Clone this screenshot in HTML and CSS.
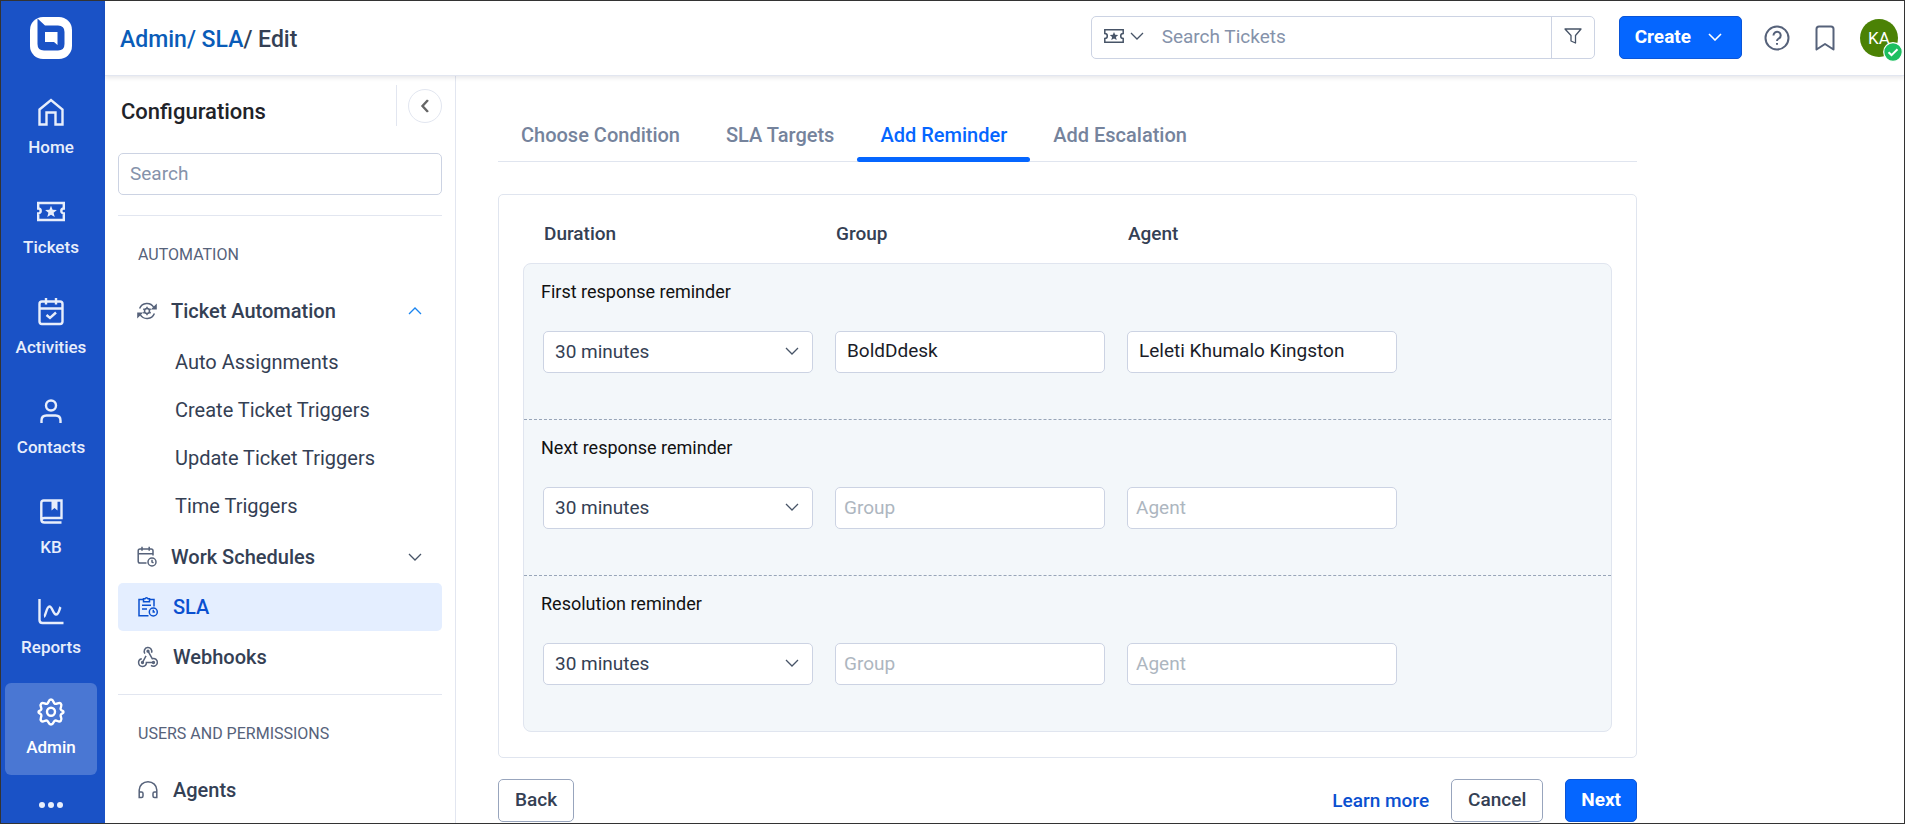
FILE: index.html
```html
<!DOCTYPE html>
<html lang="en">
<head>
<meta charset="utf-8">
<title>Admin / SLA / Edit</title>
<link rel="stylesheet" href="styles.css">
</head>
<body>
<div class="app">
  <nav class="rail" aria-label="Main">
    <a class="logo" href="#" aria-label="Home page">
      <svg width="42" height="42" viewBox="0 0 42 42"><rect width="42" height="42" rx="13" fill="#fff"/><path d="M7.500 1.500 L15 8.500 H28 Q34.500 8.500 34.500 15 V27 Q34.500 33.500 28 33.500 H14 Q7.500 33.500 7.500 27 Z" fill="#1a52c6"/><path d="M15 15h12.500v13l-3.500-3h-9z" fill="#fff"/></svg>
    </a>
    <a class="rail-item" href="#">
      <svg class="rail-icon" viewBox="0 0 28 28"><path d="M2.500 11.500 14 2l11.500 9.500V26.500h-7v-12h-9v12h-7z"/></svg>
      <span>Home</span>
    </a>
    <a class="rail-item" href="#">
      <svg class="rail-icon" viewBox="0 0 28 28"><path d="M1.200 5h25.600v5.500a2.500 2.500 0 0 0 0 5V22H1.200v-6.500a2.500 2.500 0 0 0 0-5z"/><path class="solid" d="M14 7.800l1.600 4 4.300.3-3.300 2.700 1.100 4.200-3.700-2.300-3.700 2.300 1.100-4.200-3.300-2.700 4.300-.3z"/></svg>
      <span>Tickets</span>
    </a>
    <a class="rail-item" href="#">
      <svg class="rail-icon" viewBox="0 0 28 28"><rect x="2.500" y="3.500" width="23" height="22.500" rx="2.500"/><path d="M2.500 10.500h23M9 0v6.500M19 0v6.500M9.500 17l3.500 3 6-5.500"/></svg>
      <span>Activities</span>
    </a>
    <a class="rail-item" href="#">
      <svg class="rail-icon" viewBox="0 0 28 28"><circle cx="14" cy="7.500" r="5"/><path d="M4.500 25V22.500q0-5 5-5h9q5 0 5 5V25"/></svg>
      <span>Contacts</span>
    </a>
    <a class="rail-item" href="#">
      <svg class="rail-icon" viewBox="0 0 28 28"><path d="M24.500 24.500H7.500q-3.200 0-3.200-3V5q0-2.500 2.500-2.500h17.700v17.500H7.500q-3 0-3 2"/><path class="solid" d="M14.500 2.500h6v10l-3-2.500-3 2.500z"/></svg>
      <span>KB</span>
    </a>
    <a class="rail-item" href="#">
      <svg class="rail-icon" viewBox="0 0 28 28"><path d="M2.500 1v21q0 3 3 3H26.500"/><path d="M7 18.500c1.500 0 2.500-10 5.500-10s3.500 8 6.500 8 3.500-6 4.500-7.500"/></svg>
      <span>Reports</span>
    </a>
    <a class="rail-item active" href="#" aria-current="page">
      <svg class="rail-icon" viewBox="0 0 28 28"><circle cx="14" cy="13.800" r="4"/><path d="M14 1.500c2.800 0 2 3.500 4 4.300s3.900-2.200 5.800-.2-.9 3.800-.1 5.800 2.800.8 2.800 2.600-2 1-2.800 2.900 2.200 3.800.1 5.900-3.800-1-5.800-.2-1.200 3.900-4 3.900-2-3.100-4-3.900-3.900 2.200-5.800.2.900-4 .1-5.900-2.800-1.100-2.800-2.900 2-.6 2.800-2.600-2.200-3.800-.1-5.800 3.800 1 5.800.2 1.200-4.300 4-4.300z"/></svg>
      <span>Admin</span>
    </a>
    <button class="rail-more" type="button" aria-label="More">
      <svg width="26" height="8" viewBox="0 0 26 8"><circle cx="4" cy="4" r="3"/><circle cx="13" cy="4" r="3"/><circle cx="22" cy="4" r="3"/></svg>
    </button>
  </nav>

  <div class="page">
    <header class="topbar">
      <div class="crumbs"><a href="#">Admin/</a> <a href="#">SLA</a>/ Edit</div>
      <div class="search-tickets">
        <button class="scope" type="button" aria-label="Search scope">
          <svg width="20" height="14" viewBox="0 0 20 14"><path d="M.8.800h18.400v3.700a2.300 2.300 0 0 0 0 5v3.700H.8V9.500a2.300 2.300 0 0 0 0-5z" fill="none" stroke="#475467" stroke-width="1.500"/><path d="M10 3l1.200 2.800 3 .2-2.300 2 .8 3-2.700-1.600L7.300 11l.8-3-2.300-2 3-.2z" fill="#475467"/></svg>
          <svg class="chev" viewBox="0 0 14 8"><path d="M1 1l6 6 6-6"/></svg>
        </button>
        <input type="text" placeholder="Search Tickets" aria-label="Search Tickets">
        <button class="filter" type="button" aria-label="Filter">
          <svg width="18" height="16" viewBox="0 0 18 16"><path d="M1 1h16l-5.500 6.500v5.500v2L7 13V7.500z" fill="none" stroke="#475467" stroke-width="1.300" stroke-linejoin="round"/></svg>
        </button>
      </div>
      <button class="btn primary create" type="button">Create
        <svg class="chev" viewBox="0 0 14 8"><path d="M1 1l6 6 6-6"/></svg>
      </button>
      <button class="icon-btn" type="button" aria-label="Help">
        <svg width="26" height="26" viewBox="0 0 26 26"><circle cx="13" cy="13" r="11.500"/><path d="M9.500 10.500a3.600 3.600 0 1 1 5.600 2.800c-1.300.9-2.100 1.300-2.100 2.700M13 18v1.800"/></svg>
      </button>
      <button class="icon-btn" type="button" aria-label="Bookmarks">
        <svg width="20" height="26" viewBox="0 0 20 26"><path d="M1.500 24.500V4q0-2.500 2.500-2.500h12q2.500 0 2.500 2.500v20.500L10 19z"/></svg>
      </button>
      <button class="avatar" type="button" aria-label="Account">KA
        <svg class="status" viewBox="0 0 20 20"><circle cx="10" cy="10" r="9.300" fill="#1dbf60" stroke="#fff" stroke-width="1.200"/><path d="M5.500 10.300l3 2.800 6-5.800" fill="none" stroke="#fff" stroke-width="2"/></svg>
      </button>
    </header>

    <div class="body">
      <aside class="config">
        <div class="config-head">
          <h2>Configurations</h2>
          <button class="collapse" type="button" aria-label="Collapse">
            <svg width="9" height="14" viewBox="0 0 9 14"><path d="M7.500 1L2 7l5.500 6" fill="none" stroke="#666" stroke-width="2.400"/></svg>
          </button>
        </div>
        <input class="config-search" type="text" placeholder="Search" aria-label="Search configurations">
        <section class="group">
          <h3>AUTOMATION</h3>
          <ul class="menu">
            <li><a class="entry" href="#">
              <svg class="entry-icon" viewBox="0 0 20 20"><path d="M2.600 7.500A7.900 7.900 0 0 1 16.800 6.500M17.400 12.500A7.900 7.900 0 0 1 3.200 13.500"/><path class="solid" d="M19.800 2.500V8.500h-6zM.2 17.500v-6h6z"/><circle cx="10" cy="10" r="2.500"/><path d="M10 5.800v1.500M10 12.700v1.500M6.300 7.900l1.300.8M12.400 11.300l1.300.8M6.300 12.100l1.300-.8M12.400 8.700l1.300-.8"/></svg>
              <span>Ticket Automation</span><svg class="chev open" viewBox="0 0 14 8"><path d="M1 7l6-6 6 6"/></svg></a>
              <ul class="submenu">
                <li><a href="#">Auto Assignments</a></li>
                <li><a href="#">Create Ticket Triggers</a></li>
                <li><a href="#">Update Ticket Triggers</a></li>
                <li><a href="#">Time Triggers</a></li>
              </ul>
            </li>
            <li><a class="entry" href="#">
              <svg class="entry-icon" viewBox="0 0 20 20"><path d="M9.500 16H3q-1.800 0-1.800-1.800V3.800Q1.200 2 3 2h11.200Q16 2 16 3.800V8.500M1.200 6.700H16M5-.2v4M12.200-.2v4"/><circle cx="15" cy="15" r="4"/><path d="M15 12.800V15l1.500.8"/></svg>
              <span>Work Schedules</span><svg class="chev" viewBox="0 0 14 8"><path d="M1 1l6 6 6-6"/></svg></a></li>
            <li><a class="entry flat selected" href="#">
              <svg class="entry-icon" viewBox="0 0 20 20"><path d="M10.500 18.800H1V2.500h4.500M11.500 2.500H16V9.500M5.500 4.800V1.800H7a1.600 1.600 0 0 1 3 0h1.500v3zM4 8.300h9M4 12h5"/><circle cx="15.300" cy="15" r="4"/><path d="M15.300 12.800V15h1.600"/></svg>
              <span>SLA</span></a></li>
            <li><a class="entry flat" href="#">
              <svg class="entry-icon" viewBox="0 0 20 20"><path d="M6.900 6.600a3.800 3.800 0 1 1 6.600-.8M10 4.200l4.200 7.500a3.900 3.900 0 1 1-1.200 6.700M15.500 15.500H8.400a3.900 3.900 0 1 1-4.600-3.800M4.500 15.500L8 8.800"/><circle cx="10" cy="4.200" r=".9"/><circle cx="15.500" cy="15.500" r=".9"/><circle cx="4.500" cy="15.500" r=".9"/></svg>
              <span>Webhooks</span></a></li>
          </ul>
        </section>
        <section class="group">
          <h3>USERS AND PERMISSIONS</h3>
          <ul class="menu">
            <li><a class="entry flat" href="#">
              <svg class="entry-icon" viewBox="0 0 20 20"><path d="M1.200 17V10a8.800 8.300 0 0 1 17.600 0v7M1.200 12h2.300q1.500 0 1.500 1.500V16q0 1.500-1.500 1.500H1.200zM18.800 12h-2.300q-1.500 0-1.500 1.500V16q0 1.500 1.500 1.500h2.300z"/></svg>
              <span>Agents</span></a></li>
          </ul>
        </section>
      </aside>

      <main class="content">
        <div class="wizard">
          <div class="tabs" role="tablist">
            <button type="button" role="tab">Choose Condition</button>
            <button type="button" role="tab">SLA Targets</button>
            <button type="button" role="tab" class="current" aria-selected="true">Add Reminder</button>
            <button type="button" role="tab">Add Escalation</button>
          </div>
          <form class="card">
            <div class="cols heads"><span>Duration</span><span>Group</span><span>Agent</span></div>
            <div class="reminders">
              <fieldset class="reminder">
                <legend>First response reminder</legend>
                <div class="cols">
                  <div class="select"><select aria-label="First response duration"><option>30 minutes</option></select><svg class="chev" viewBox="0 0 14 8"><path d="M1 1l6 6 6-6"/></svg></div>
                  <input type="text" value="BoldDdesk" placeholder="Group" aria-label="First response group">
                  <input type="text" value="Leleti Khumalo Kingston" placeholder="Agent" aria-label="First response agent">
                </div>
              </fieldset>
              <fieldset class="reminder">
                <legend>Next response reminder</legend>
                <div class="cols">
                  <div class="select"><select aria-label="Next response duration"><option>30 minutes</option></select><svg class="chev" viewBox="0 0 14 8"><path d="M1 1l6 6 6-6"/></svg></div>
                  <input type="text" placeholder="Group" aria-label="Next response group">
                  <input type="text" placeholder="Agent" aria-label="Next response agent">
                </div>
              </fieldset>
              <fieldset class="reminder">
                <legend>Resolution reminder</legend>
                <div class="cols">
                  <div class="select"><select aria-label="Resolution duration"><option>30 minutes</option></select><svg class="chev" viewBox="0 0 14 8"><path d="M1 1l6 6 6-6"/></svg></div>
                  <input type="text" placeholder="Group" aria-label="Resolution group">
                  <input type="text" placeholder="Agent" aria-label="Resolution agent">
                </div>
              </fieldset>
            </div>
          </form>
          <div class="actions">
            <button class="btn" type="button">Back</button>
            <a class="learn" href="#">Learn more</a>
            <button class="btn" type="button">Cancel</button>
            <button class="btn primary" type="button">Next</button>
          </div>
        </div>
      </main>
    </div>
  </div>
</div>
</body>
</html>
```
FILE: styles.css
```css
* { box-sizing: border-box; }
body { margin: 0; font-family: Roboto, "Liberation Sans", sans-serif; font-size: 19px; line-height: 24px; color: #344054; background: #fff; }
a { color: inherit; text-decoration: none; }
button, input, select { font: inherit; color: inherit; margin: 0; }
button { background: none; border: 0; padding: 0; cursor: pointer; }
h2, h3, ul, fieldset { margin: 0; padding: 0; border: 0; }
ul { list-style: none; }
svg { display: block; flex: none; }

.app { display: flex; height: 100vh; border: 1px solid #333; overflow: hidden; }

.rail { flex: none; width: 104px; background: #1a52c6; padding: 16px 8px 0 4px; display: flex; flex-direction: column; gap: 8px; color: #e8eefb; overflow: hidden; }
.logo { align-self: center; margin-bottom: 16px; }
.rail-item { flex: none; height: 92px; border-radius: 6px; display: flex; flex-direction: column; align-items: center; padding-top: 15px; gap: 9px; font-size: 17px; font-weight: 500; }
.rail-item.active { background: #4a77d3; color: #fff; }
.rail-icon { width: 28px; height: 28px; fill: none; stroke: currentColor; stroke-width: 2.400; overflow: visible; }
.rail-icon .solid { fill: currentColor; stroke: none; }
.rail-more { flex: none; align-self: center; padding-top: 18px; }
.rail-more svg { fill: currentColor; }

.page { flex: 1; min-width: 0; display: flex; flex-direction: column; }
.topbar { position: relative; flex: none; height: 75px; display: flex; align-items: center; padding: 0 6px 0 15px; border-bottom: 1px solid #e2e6f0; box-shadow: 0 2px 4px rgba(16, 24, 40, .1); }
.crumbs { flex: 1; padding-top: 3px; font-size: 23px; font-weight: 500; }
.crumbs a { color: #0a5cb8; }
.search-tickets { display: flex; width: 504px; height: 43px; margin-bottom: 2px; border: 1px solid #ccd3e3; border-radius: 5px; }
.search-tickets input { flex: 1; min-width: 0; border: 0; outline: 0; padding: 0 0 1px 12px; background: none; }
.search-tickets input::placeholder, .config-search::placeholder { color: #8592aa; opacity: 1; }
.scope { display: flex; align-items: center; gap: 6px; padding: 0 6px 2px 12px; }
.filter { width: 43px; border-left: 1px solid #ccd3e3; padding: 0 0 2px 12px; }
.chev { width: 14px; height: 8px; fill: none; stroke: #475467; stroke-width: 1.300; }
.chev.open { stroke: #1a85f0; }

.btn { height: 43px; padding: 0 16px; border: 1px solid #98a5bd; border-radius: 5px; font-weight: 500; background: #fff; }
.btn.primary { padding: 0 15px; background: #0566ff; border-color: #0a55d8; color: #fff; font-weight: 700; }
.btn.create { display: flex; align-items: center; gap: 17px; margin: 0 20px 2px 24px; padding: 0 19px 0 15px; }
.create .chev { stroke: #fff; stroke-width: 1.600; }
.icon-btn { margin: 0 1px 0 2px; }
.icon-btn + .icon-btn { margin: 0 25px 0 24px; }
.icon-btn svg { fill: none; stroke: #56627a; stroke-width: 2; stroke-linejoin: round; }
.avatar { position: relative; width: 38px; height: 38px; border-radius: 50%; background: #4b8205; color: #fff; font-size: 17px; }
.status { position: absolute; right: -5px; bottom: -5px; width: 20px; height: 20px; }

.body { flex: 1; min-height: 0; display: flex; }
.config { flex: none; width: 351px; border-right: 1px solid #e2e6f0; padding: 9px 13px 0; overflow: hidden; }
.config-head { display: flex; justify-content: space-between; height: 41px; }
.config-head h2 { padding: 15px 0 0 3px; font-size: 22px; font-weight: 500; color: #1f2329; }
.collapse { display: flex; width: 46px; border-left: 1px solid #e2e6f0; padding: 4px 0 0 11px; }
.collapse svg { width: 34px; height: 34px; padding: 9px; border: 1px solid #e2e6f0; border-radius: 50%; }
.config-search { display: block; width: 100%; height: 42px; margin: 27px 0 20px; padding: 0 11px 2px; border: 1px solid #ccd3e3; border-radius: 5px; }
.group { border-top: 1px solid #e2e6f0; }
.group h3 { padding: 27px 20px 20px; font-size: 16px; font-weight: 400; color: #56627a; }
.menu { display: grid; gap: 2px; padding-bottom: 13px; font-size: 20px; }
.entry { display: flex; align-items: center; height: 48px; padding: 0 20px 0 19px; gap: 14px; border-radius: 5px; font-weight: 500; }
.entry.flat { gap: 15px; padding-left: 20px; }
.entry span { flex: 1; }
.entry-icon { width: 20px; height: 20px; fill: none; stroke: #56627a; stroke-width: 1.500; overflow: visible; }
.entry-icon .solid { fill: #56627a; stroke: none; }
.entry.selected { background: #e4eeff; color: #0a50d0; }
.selected .entry-icon { stroke: #0a50d0; }
.submenu { padding: 3px 0 1px; }
.submenu a { display: flex; align-items: center; height: 48px; padding-left: 57px; }

.content { flex: 1; min-width: 0; padding: 32px 42px 0; overflow: hidden; }
.wizard { max-width: 1139px; }
.tabs { display: flex; border-bottom: 1px solid #e0e5ef; }
.tabs button { position: relative; height: 53px; padding: 0 23px; color: #75839c; font-size: 20px; font-weight: 500; }
.tabs .current { color: #0566ff; }
.tabs .current::after { content: ""; position: absolute; left: 0; right: 0; bottom: -1px; height: 5px; border-radius: 3px; background: #0566ff; }
.card { margin-top: 32px; padding: 0 24px 25px; border: 1px solid #e0e5ef; border-radius: 5px; }
.cols { display: grid; grid-template-columns: repeat(3, minmax(0, 270px)); column-gap: 22px; }
.heads { padding: 27px 21px 17px; font-weight: 500; }
.reminders { border: 1px solid #e0e5ef; border-radius: 8px; background: #f3f7fa; }
.reminder { padding: 16px 19px 46px; }
.reminder + .reminder { border-top: 1px dashed #98a5b8; }
.reminder legend { float: left; width: 100%; margin-bottom: 27px; padding: 0; font-size: 18px; color: #111; text-indent: -2px; }
.reminder .cols { clear: both; }
.reminder input, .reminder select { width: 100%; height: 42px; border: 1px solid #ccd3e3; border-radius: 5px; background: #fff; padding: 0 10px 3px 11px; color: #1a1c28; }
.reminder input:placeholder-shown { padding: 0 8px 2px; }
.reminder input::placeholder { color: #adb6c0; opacity: 1; }
.select { position: relative; }
.reminder select { appearance: none; color: #344054; padding: 0 40px 0 11px; }
.select .chev { position: absolute; right: 14px; top: 16px; pointer-events: none; }
.actions { display: flex; align-items: center; gap: 22px; padding-top: 21px; }
.actions .btn { padding-bottom: 2px; }
.learn { margin-left: auto; color: #0a50d0; font-weight: 500; }
```
